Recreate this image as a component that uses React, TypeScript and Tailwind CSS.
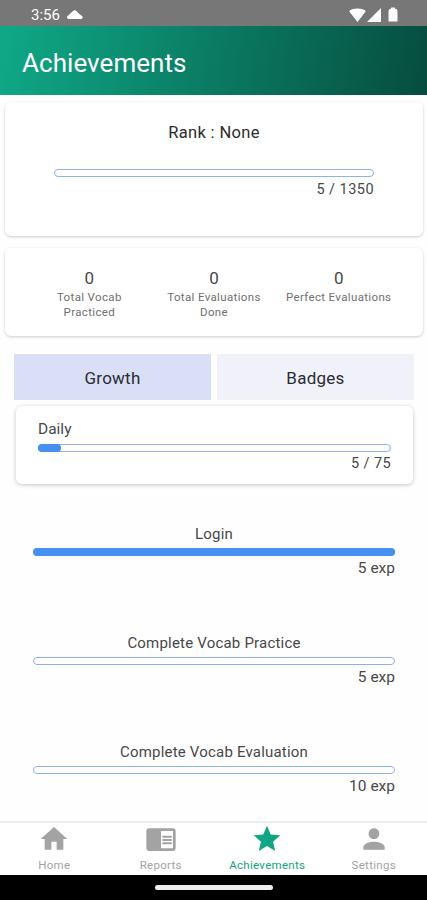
import React, { useState } from 'react';
import clsx from 'clsx';
import { MdChromeReaderMode, MdHome, MdPerson, MdStar } from 'react-icons/md';

type ProgressBarProps = {
  percent: number;
};

const ProgressBar: React.FC<ProgressBarProps> = ({ percent }) => (
  <div className="h-2 rounded-full border border-[#8fb1f3] bg-white">
    {percent > 0 && (
      <div
        className="h-full rounded-full bg-[#4590f0] shadow-[0_0_0_1px_#4590f0]"
        style={{ width: `${percent}%` }}
      />
    )}
  </div>
);

const stats = [
  { label: 'Total Vocab Practiced', value: 0 },
  { label: 'Total Evaluations Done', value: 0 },
  { label: 'Perfect Evaluations', value: 0 },
];

const tasks = [
  { name: 'Login', exp: 5, percent: 100 },
  { name: 'Complete Vocab Practice', exp: 5, percent: 0 },
  { name: 'Complete Vocab Evaluation', exp: 10, percent: 0 },
];

const navItems = [
  { name: 'Home', icon: MdHome },
  { name: 'Reports', icon: MdChromeReaderMode },
  { name: 'Achievements', icon: MdStar },
  { name: 'Settings', icon: MdPerson },
];

const StatusBar = () => (
  <div className="flex h-[26px] shrink-0 items-center bg-[#777777] pl-[31px] pr-[29px] pt-[3px] text-white">
    <span className="pt-[2px] text-[15px] leading-none">3:56</span>
    <svg className="ml-[7px] h-[9px] w-4" viewBox="0 0 16 9" fill="currentColor">
      <path d="M1.500 9a1.700 1.700 0 0 1-.6-3.200L6 1a2.600 2.600 0 0 1 3.500 0L12 3.700l3 2.300A1.700 1.700 0 0 1 14.300 9z" />
    </svg>
    <div className="ml-auto flex items-center">
      <svg className="h-[14px] w-[17px]" viewBox="0 0 17 14" fill="currentColor">
        <path d="M8.5 14 .3 3.400q0-1.500 3-2.200a20 20 0 0 1 10.400 0q3 .7 3 2.200z" />
      </svg>
      <svg className="ml-px h-[14px] w-[14px]" viewBox="0 0 14 14" fill="currentColor">
        <path d="M14 0v14H0z" />
      </svg>
      <svg className="ml-[7px] h-[15px] w-[10px]" viewBox="0 0 10 15" fill="currentColor">
        <path d="M3.300.5h3.400l.5 1.200Q9.500 2 9.500 4v10.500h-9V4Q.5 2 2.800 1.700z" />
      </svg>
    </div>
  </div>
);

const App: React.FC = () => {
  const [tab, setTab] = useState('Growth');
  const [page, setPage] = useState('Achievements');

  return (
    <div className="flex h-[900px] w-[427px] flex-col overflow-hidden bg-[#fefefe] font-['Roboto',sans-serif] text-[#484848]">
      <StatusBar />
      <header className="flex h-[69px] shrink-0 items-center bg-linear-[100deg,#0fa987,#064d3e] pl-[22px] pt-[4px]">
        <h1 className="text-[26px] leading-none tracking-[0.05px] text-white">Achievements</h1>
      </header>

      <main className="flex min-h-0 flex-1 flex-col">
        <section className="ml-[5px] mr-1 mt-[7px] h-[134px] shrink-0 rounded-md bg-white px-[49px] pt-[20px] shadow-[0_1px_3px_rgba(0,0,0,0.2)]">
          <h2 className="pt-px text-center text-[16.500px] leading-5 tracking-[0.35px] text-[#2b2b2b]">Rank : None</h2>
          <div className="mt-[26px]">
            <ProgressBar percent={0} />
          </div>
          <p className="mt-[3px] text-right text-[14.500px] leading-[19px] tracking-[0.45px]">5 / 1350</p>
        </section>

        <section className="ml-[5px] mr-1 mt-3 flex h-[88px] shrink-0 rounded-md bg-white px-[22px] pt-5 shadow-[0_1px_3px_rgba(0,0,0,0.2)]">
          {stats.map(stat => (
            <div key={stat.label} className="flex w-[125px] flex-col items-center px-2 text-center">
              <span className="mb-[2px] text-[17px] leading-5">{stat.value}</span>
              <span className="text-[11.500px] leading-[15px] tracking-[0.35px] text-[#707070]">{stat.label}</span>
            </div>
          ))}
        </section>

        <div className="ml-[14px] mr-[13px] mt-[18px] flex shrink-0 gap-[6px]">
          {['Growth', 'Badges'].map(name => (
            <button
              key={name}
              className={clsx(
                'h-[46px] flex-1 pt-[3px] text-[17px] tracking-[0.25px] text-[#2b2b33]',
                tab === name ? 'bg-[#d8dff6]' : 'bg-[#f0f1f9]'
              )}
              onClick={() => setTab(name)}
            >
              {name}
            </button>
          ))}
        </div>

        <section className="ml-4 mr-[14px] mt-[6px] h-[78px] shrink-0 rounded-md bg-white px-[22px] pt-[13px] shadow-[0_1px_4px_rgba(0,0,0,0.22)]">
          <h3 className="text-[15.500px] leading-5">Daily</h3>
          <div className="mt-[5px]">
            <ProgressBar percent={5.9} />
          </div>
          <p className="mt-[3px] text-right text-[14.500px] leading-[18px] tracking-[0.4px]">5 / 75</p>
        </section>

        <div className="flex flex-col pl-[33px] pr-8 pt-[40px]">
          {tasks.map(task => (
            <div key={task.name} className="h-[109px] shrink-0">
              <h3 className="text-center text-[15px] leading-5 tracking-[0.2px]">{task.name}</h3>
              <div className="mt-1">
                <ProgressBar percent={task.percent} />
              </div>
              <p className="mt-[2px] text-right text-[15.500px] leading-5">{task.exp} exp</p>
            </div>
          ))}
        </div>
      </main>

      <nav className="grid h-[54px] shrink-0 grid-cols-4 border-t-2 border-[#eeeeee] bg-white pl-px">
        {navItems.map(({ name, icon: Icon }) => (
          <button
            key={name}
            className={clsx('flex flex-col items-center', page === name ? 'text-[#12a583]' : 'text-[#a3a3a3]')}
            onClick={() => setPage(name)}
          >
            <Icon size={32} />
            <span className="mt-[3px] text-[11.500px] leading-[15px] tracking-[0.3px]">{name}</span>
          </button>
        ))}
      </nav>
      <div className="flex h-[25px] shrink-0 justify-center bg-black pt-[10px]">
        <div className="h-[5px] w-[118px] rounded-full bg-[#eeeeee]" />
      </div>
    </div>
  );
};

export default App;
